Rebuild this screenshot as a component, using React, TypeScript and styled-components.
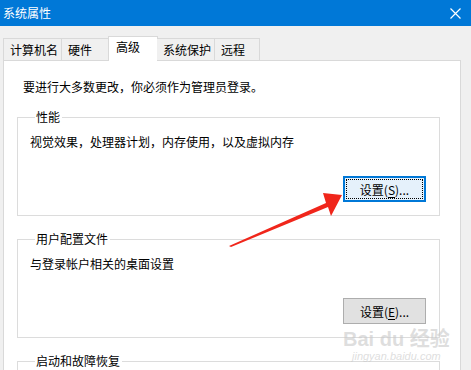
import React from 'react';
import styled, { createGlobalStyle } from 'styled-components';

const Global = createGlobalStyle`
  html, body {
    margin: 0;
    padding: 0;
    background: #f0f0f0;
  }
  body {
    font-family: "Noto Sans CJK SC", "Noto Sans", "Liberation Sans", sans-serif;
    font-size: 12px;
    color: #000;
  }
`;

const Window = styled.div`
  position: relative;
  width: 471px;
  height: 370px;
  overflow: hidden;
  background: #f0f0f0;
`;

const TitleBar = styled.div`
  height: 26px;
  background: #0078d7;
  color: #fff;
  display: flex;
  align-items: center;
  justify-content: space-between;
  padding: 0 10px 0 3px;
  box-sizing: border-box;
`;

const Title = styled.span`
  font-size: 12px;
  line-height: 16px;
`;

const CloseIcon = styled.svg`
  display: block;
  flex: none;
`;

const Body = styled.div`
  padding: 10px 10px 0 3px;
`;

const TabStrip = styled.div`
  display: flex;
  align-items: flex-end;
  height: 25px;
  margin-bottom: -1px;
  position: relative;
  z-index: 1;
`;

const Tab = styled.div<{ $active?: boolean; $w: number }>`
  box-sizing: border-box;
  width: ${(p) => p.$w}px;
  height: ${(p) => (p.$active ? 25 : 22)}px;
  margin-bottom: ${(p) => (p.$active ? 0 : 1)}px;
  margin-left: ${(p) => (p.$active ? -1 : 0)}px;
  margin-right: ${(p) => (p.$active ? -1 : 0)}px;
  border: 1px solid #d9d9d9;
  border-bottom: none;
  border-left-width: ${(p) => (p.$active ? 1 : 0)}px;
  background: ${(p) => (p.$active ? '#fff' : '#f0f0f0')};
  padding: ${(p) => (p.$active ? '2px 0 0 7px' : '3px 0 0 6px')};
  line-height: 16px;
  white-space: nowrap;
  &:first-child {
    border-left-width: 1px;
  }
`;

const Panel = styled.div`
  background: #fff;
  border: 1px solid #d9d9d9;
  height: 400px;
  padding: 18px 20px 0 13px;
`;

const Intro = styled.div`
  line-height: 16px;
  padding-left: 6px;
  margin-bottom: 14px;
`;

const Group = styled.fieldset`
  margin: 0 0 15px 0;
  padding: 0 13px 13px 12px;
  border: 1px solid #dcdcdc;
  min-inline-size: 0;
`;

const Legend = styled.legend`
  margin-left: 5px;
  padding: 0 2px 0 1px;
  line-height: 16px;
`;

const GroupText = styled.div`
  line-height: 16px;
  margin-top: 9px;
`;

const ButtonRow = styled.div`
  display: flex;
  justify-content: flex-end;
  margin-top: 26px;
`;

const Btn = styled.button<{ $focused?: boolean }>`
  box-sizing: border-box;
  width: 83px;
  height: 26px;
  font: inherit;
  font-size: 12px;
  color: #000;
  background: ${(p) => (p.$focused ? '#e5f1fb' : '#e1e1e1')};
  border: ${(p) => (p.$focused ? '2px solid #0078d7' : '1px solid #adadad')};
  padding: 0;
  position: relative;
  &::after {
    content: '';
    display: ${(p) => (p.$focused ? 'block' : 'none')};
    position: absolute;
    inset: 1px;
    border: 1px dotted #000;
  }
  u {
    text-underline-offset: 2px;
  }
`;

const Overlay = styled.svg`
  position: absolute;
  left: 0;
  top: 0;
  pointer-events: none;
`;

const Watermark = styled.div`
  position: absolute;
  left: 343px;
  top: 328px;
  color: rgba(200, 200, 200, 0.6);
  font-family: "Liberation Sans", "Noto Sans CJK SC", sans-serif;
  text-align: center;
  white-space: nowrap;
  pointer-events: none;
`;

const MarkBig = styled.div`
  font-size: 20px;
  font-weight: bold;
  line-height: 22px;
`;

const MarkSmall = styled.div`
  font-size: 11px;
  font-style: italic;
  line-height: 12px;
`;

const tabs = [
  { label: '计算机名', w: 59 },
  { label: '硬件', w: 47 },
  { label: '高级', w: 50, active: true },
  { label: '系统保护', w: 58 },
  { label: '远程', w: 45 },
];

export default function App() {
  return (
    <>
      <Global />
      <Window>
        <TitleBar>
          <Title>系统属性</Title>
          <CloseIcon width="11" height="11" viewBox="0 0 11 11">
            <path d="M0.5 0.5 L10.5 10.5 M10.5 0.5 L0.5 10.5" stroke="#fff" strokeWidth="1.2" />
          </CloseIcon>
        </TitleBar>
        <Body>
          <TabStrip>
            {tabs.map((t) => (
              <Tab key={t.label} $w={t.w} $active={t.active}>
                {t.label}
              </Tab>
            ))}
          </TabStrip>
          <Panel>
            <Intro>要进行大多数更改，你必须作为管理员登录。</Intro>
            <Group>
              <Legend>性能</Legend>
              <GroupText>视觉效果，处理器计划，内存使用，以及虚拟内存</GroupText>
              <ButtonRow>
                <Btn $focused>
                  设置(<u>S</u>)...
                </Btn>
              </ButtonRow>
            </Group>
            <Group>
              <Legend>用户配置文件</Legend>
              <GroupText>与登录帐户相关的桌面设置</GroupText>
              <ButtonRow>
                <Btn>
                  设置(<u>E</u>)...
                </Btn>
              </ButtonRow>
            </Group>
            <Group>
              <Legend>启动和故障恢复</Legend>
            </Group>
          </Panel>
        </Body>
        <Watermark>
          <MarkBig>Bai du 经验</MarkBig>
          <MarkSmall>jingyan.baidu.com</MarkSmall>
        </Watermark>
        <Overlay width="471" height="370" viewBox="0 0 471 370">
          <polygon points="229,246 326,203 323,193 342,195 331,216 328,207 231,247" fill="#f0261b" />
        </Overlay>
      </Window>
    </>
  );
}
